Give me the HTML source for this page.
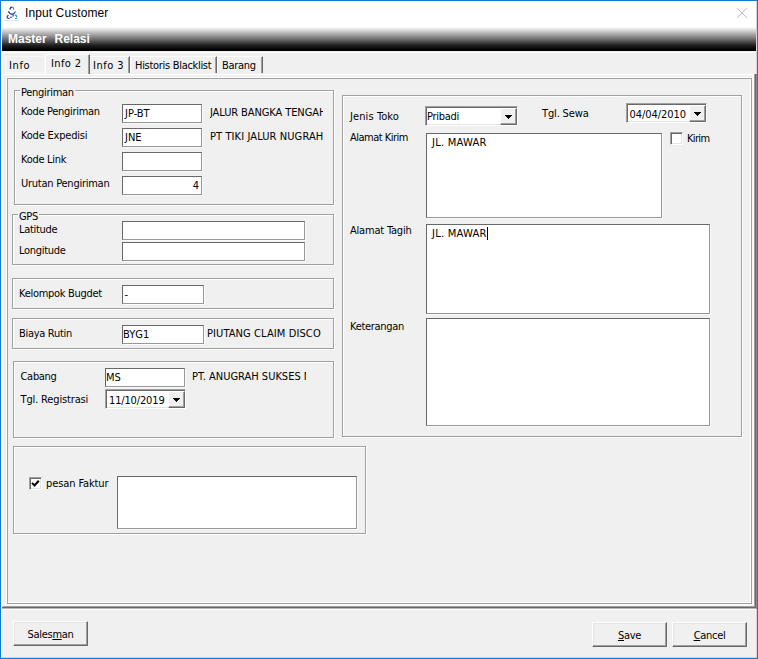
<!DOCTYPE html>
<html><head><meta charset="utf-8"><title>Input Customer</title>
<style>
html,body{margin:0;padding:0}
body{width:758px;height:659px;position:relative;overflow:hidden;background:#f0f0f0;
 font-family:"DejaVu Sans Condensed","DejaVu Sans","Liberation Sans",sans-serif;font-size:11px;color:#000}
div,span{position:absolute;box-sizing:border-box}
.t{white-space:nowrap;line-height:13px;height:13px;letter-spacing:-0.3px}
.c{letter-spacing:-0.1px;overflow:hidden}
.in{background:#fff;border:1px solid;border-color:#686868 #989898 #989898 #686868;box-shadow:1px 1px 0 #fafafa}
.in .t{left:2px;top:2px;letter-spacing:0}
.g{border:1px solid #a0a0a0;box-shadow:1px 1px 0 #fff, inset 1px 1px 0 #fff}
.cap{background:#f0f0f0;padding:0 1px}
.btn{border:1px solid;border-color:#fff #696969 #696969 #fff;box-shadow:inset -1px -1px 0 #a0a0a0, inset 1px 1px 0 #e3e3e3;text-align:center}
.btn .t{position:static;display:block;width:100%;text-align:center;margin-top:6px}
u{text-decoration:underline}
</style></head><body>
<!-- window frame -->
<div style="left:0;top:0;width:758px;height:659px;border:1px solid #1179d6;z-index:50;pointer-events:none"></div>
<div style="left:756px;top:1px;width:1px;height:657px;background:#d8d4d0;z-index:49"></div>
<div style="left:756px;top:74px;width:1px;height:535px;background:#8f8a86;z-index:49"></div>
<div style="left:1px;top:657px;width:756px;height:1px;background:#ddd3ca;z-index:49"></div>
<!-- title bar -->
<div style="left:1px;top:1px;width:756px;height:26px;background:#fff"></div>
<svg style="position:absolute;left:5px;top:5px" width="16" height="17" viewBox="0 0 16 17">
 <path d="M4.9 4.7 C5.1 2.9 6.2 2.1 7.3 2.2" fill="none" stroke="#233a98" stroke-width="1.3"/>
 <path d="M7.3 2.2 C8.3 2.3 8.7 3 8.6 4.6" fill="none" stroke="#1e96dc" stroke-width="1.2"/>
 <path d="M3.3 6.4 C4.4 8.4 5.8 9.3 6.9 9.3 C8 9.3 9 8.6 9.8 7.4" fill="none" stroke="#1d3594" stroke-width="1.2"/>
 <path d="M9.7 7.6 L10.6 6.4" fill="none" stroke="#1e8fdc" stroke-width="1.1"/>
 <path d="M3.6 10.3 C2.3 10.5 1.9 11.8 2.3 12.7 C2.7 13.5 3.7 13.6 4.6 13.4" fill="none" stroke="#1d3594" stroke-width="1.2"/>
 <path d="M5.2 12.3 L6.8 12 M7.3 11 L8.9 10.7" fill="none" stroke="#2040a4" stroke-width="1.2"/>
 <path d="M9.6 10.3 C10.9 9.9 11.8 10.5 11.7 12.3" fill="none" stroke="#1e96dc" stroke-width="1.2"/>
 <path d="M10 13.4 H12" stroke="#1ea0e2" stroke-width="1"/>
 <path d="M0 15.5 H14" stroke="#d6e6f7" stroke-width="1"/>
</svg>
<span class="t" style="left:25px;top:6px;font:12px/15px 'Liberation Sans',sans-serif;height:15px;letter-spacing:0.1px">Input Customer</span>
<svg style="position:absolute;left:736px;top:7px" width="12" height="12" viewBox="0 0 12 12"><path d="M1 1 L11 11 M11 1 L1 11" stroke="#b4b4b4" stroke-width="0.9" fill="none"/></svg>
<!-- banner -->
<div style="left:1px;top:27px;width:1px;height:631px;background:#fff"></div>
<div style="left:2px;top:27px;width:754px;height:24px;background:linear-gradient(#fff 0%,#7c7c7c 46%,#1e1e1e 77%,#000 95%,#000 100%)"></div>
<span class="t" style="left:8px;top:32px;color:#fff;font:bold 12px/14px 'Liberation Sans',sans-serif;height:14px;letter-spacing:0;word-spacing:4.5px">Master Relasi</span>
<!-- outer panel -->
<div style="left:2px;top:52px;width:754px;height:1px;background:#fff"></div>
<div style="left:2px;top:52px;width:1px;height:556px;background:#fff"></div>
<div style="left:3px;top:74px;width:751px;height:1px;background:#fff"></div>
<div style="left:752px;top:75px;width:2px;height:531px;background:#f9f9f9"></div>
<div style="left:3px;top:604px;width:751px;height:2px;background:#f9f9f9"></div>
<div style="left:754px;top:74px;width:1px;height:533px;background:#a0a0a0"></div>
<div style="left:755px;top:74px;width:1px;height:534px;background:#696969"></div>
<div style="left:3px;top:606px;width:752px;height:1px;background:#a0a0a0"></div>
<div style="left:2px;top:607px;width:754px;height:1px;background:#696969"></div>
<div style="left:2px;top:608px;width:754px;height:1px;background:#b8b8b8"></div>
<div style="left:2px;top:609px;width:754px;height:1px;background:#fff"></div>
<!-- sheet -->
<div id="sheetw" style="left:6px;top:77px;width:745px;height:526px;border:1px solid #fff"></div>
<div id="sheetg" style="left:7px;top:78px;width:745px;height:526px;border:1px solid #a0a0a0"></div>
<!-- tabs -->
<div id="tab1" style="left:5px;top:56px;width:40px;height:17px;border:1px solid #f8f8f8"></div>
<span class="t" style="left:9px;top:59px;letter-spacing:0.6px">Info</span>
<div id="tab3" style="left:90px;top:56px;width:40px;height:17px;border-right:1px solid #696969;box-shadow:inset -1px 0 0 #a0a0a0;border-top:1px solid #fff"></div>
<span class="t" style="left:93px;top:59px;letter-spacing:0.5px">Info 3</span>
<div id="tab4" style="left:130px;top:56px;width:87px;height:17px;border-right:1px solid #696969;box-shadow:inset -1px 0 0 #a0a0a0;border-top:1px solid #fff;border-left:1px solid #fff"></div>
<span class="t" style="left:135px;top:59px">Historis Blacklist</span>
<div id="tab5" style="left:217px;top:56px;width:46px;height:17px;border-right:1px solid #696969;box-shadow:inset -1px 0 0 #a0a0a0;border-top:1px solid #fff;border-left:1px solid #fff"></div>
<span class="t" style="left:222px;top:59px">Barang</span>
<div id="tab2" style="left:45px;top:54px;width:45px;height:20px;background:#f0f0f0;border:1px solid;border-color:#fff #696969 transparent #fff;border-bottom:0;box-shadow:inset -1px 0 0 #a0a0a0"></div>
<span class="t" style="left:51px;top:57px;letter-spacing:0.4px">Info 2</span>

<!-- Pengiriman group -->
<div class="g" style="left:14px;top:90px;width:320px;height:115px"></div>
<span class="t cap" style="left:20px;top:86px">Pengiriman</span>
<span class="t" style="left:21px;top:105px">Kode Pengiriman</span>
<span class="t" style="left:21px;top:129px;letter-spacing:-0.2px">Kode Expedisi</span>
<span class="t" style="left:21px;top:153px">Kode Link</span>
<span class="t" style="left:21px;top:177px;letter-spacing:-0.25px">Urutan Pengiriman</span>
<div class="in" style="left:122px;top:104px;width:80px;height:19px"><span class="t">JP-BT</span></div>
<div class="in" style="left:122px;top:128px;width:80px;height:19px"><span class="t">JNE</span></div>
<div class="in" style="left:122px;top:152px;width:80px;height:19px"></div>
<div class="in" style="left:122px;top:176px;width:80px;height:19px"><span class="t" style="left:auto;right:2px">4</span></div>
<span class="t c" style="left:210px;top:106px;width:113px">JALUR BANGKA TENGAH</span>
<span class="t c" style="left:210px;top:130px;width:114px;letter-spacing:0.1px">PT TIKI JALUR NUGRAH</span>

<!-- GPS group -->
<div class="g" style="left:12px;top:214px;width:322px;height:51px"></div>
<span class="t cap" style="left:18px;top:210px">GPS</span>
<span class="t" style="left:19px;top:223px">Latitude</span>
<span class="t" style="left:19px;top:244px">Longitude</span>
<div class="in" style="left:122px;top:221px;width:183px;height:19px"></div>
<div class="in" style="left:122px;top:242px;width:183px;height:19px"></div>

<!-- Kelompok Bugdet -->
<div class="g" style="left:12px;top:278px;width:322px;height:31px"></div>
<span class="t" style="left:19px;top:287px">Kelompok Bugdet</span>
<div class="in" style="left:122px;top:285px;width:82px;height:19px"><span class="t" style="left:1.5px">-</span></div>

<!-- Biaya Rutin -->
<div class="g" style="left:12px;top:318px;width:322px;height:31px"></div>
<span class="t" style="left:19px;top:327px">Biaya Rutin</span>
<div class="in" style="left:122px;top:325px;width:82px;height:19px"><span class="t" style="left:0">BYG1</span></div>
<span class="t c" style="left:207px;top:327px;width:114px;letter-spacing:0.1px">PIUTANG CLAIM DISCO</span>

<!-- Cabang -->
<div class="g" style="left:13px;top:361px;width:321px;height:77px"></div>
<span class="t" style="left:20.5px;top:370px">Cabang</span>
<span class="t" style="left:20.5px;top:393px;letter-spacing:-0.15px">Tgl. Registrasi</span>
<div class="in" style="left:105px;top:368px;width:80px;height:19px"><span class="t" style="left:0">MS</span></div>
<span class="t c" style="left:192px;top:370px;width:114px;letter-spacing:0">PT. ANUGRAH SUKSES M</span>
<div class="sk" style="left:105px;top:389px;width:81px;height:20px"><span class="t" style="left:3px;top:4px;letter-spacing:-0.15px">11/10/2019</span><div class="dd" style="left:62px;top:1px"></div></div>

<!-- pesan faktur -->
<div class="g" style="left:13px;top:446px;width:353px;height:88px"></div>
<div class="cb" style="left:29px;top:477px"><svg width="9" height="9" viewBox="0 0 9 9" style="position:absolute;left:1px;top:1px"><path d="M1 3.9 L3.5 6.5 L7.8 1.8" stroke="#000" stroke-width="2" fill="none"/></svg></div>
<span class="t" style="left:46px;top:477px;letter-spacing:-0.1px">pesan Faktur</span>
<div class="in" style="left:117px;top:476px;width:240px;height:53px"></div>

<!-- right panel -->
<div class="g" style="left:342px;top:95px;width:400px;height:342px"></div>
<span class="t" style="left:350px;top:110px;letter-spacing:0.1px">Jenis Toko</span>
<span class="t" style="left:350px;top:131px;letter-spacing:-0.5px">Alamat Kirim</span>
<span class="t" style="left:350px;top:224px;letter-spacing:-0.2px">Alamat Tagih</span>
<span class="t" style="left:350px;top:320px">Keterangan</span>
<div class="sk" style="left:425px;top:106px;width:93px;height:20px"><span class="t" style="left:1px;top:3px;letter-spacing:-0.3px">Pribadi</span><div class="dd" style="left:74px;top:1px"></div></div>
<span class="t" style="left:542px;top:107px;letter-spacing:-0.15px">Tgl. Sewa</span>
<div class="sk" style="left:626px;top:103px;width:81px;height:20px"><span class="t" style="left:2.5px;top:4px;letter-spacing:-0.05px">04/04/2010</span><div class="dd" style="left:62px;top:1px"></div></div>
<div class="in" style="left:426px;top:133px;width:236px;height:85px"><span class="t ta">JL. MAWAR</span></div>
<div class="cb" style="left:670px;top:132px"></div>
<span class="t" style="left:687px;top:132px;letter-spacing:-0.65px">Kirim</span>
<div class="in" style="left:426px;top:224px;width:284px;height:90px"><span class="t ta">JL. MAWAR</span><div style="left:60px;top:2px;width:1px;height:13px;background:#000"></div></div>
<div class="in" style="left:426px;top:318px;width:284px;height:108px"></div>

<!-- buttons -->
<div class="btn" style="left:13px;top:621px;width:75px;height:25px"><span class="t">Sales<u>m</u>an</span></div>
<div class="btn" style="left:592px;top:622px;width:75px;height:25px"><span class="t"><u>S</u>ave</span></div>
<div class="btn" style="left:672px;top:622px;width:75px;height:25px"><span class="t"><u>C</u>ancel</span></div>
<style>
.dd{width:17px;height:17px;background:#f0f0f0;border:1px solid;border-color:#fff #696969 #696969 #fff;box-shadow:inset -1px -1px 0 #a0a0a0}
.dd:after{content:"";position:absolute;left:7px;top:9px;width:1px;height:1px;background:#000;box-shadow:-3px -3px 0 #000,-2px -3px 0 #000,-1px -3px 0 #000,0px -3px 0 #000,1px -3px 0 #000,2px -3px 0 #000,3px -3px 0 #000,-2px -2px 0 #000,-1px -2px 0 #000,0px -2px 0 #000,1px -2px 0 #000,2px -2px 0 #000,-1px -1px 0 #000,0px -1px 0 #000,1px -1px 0 #000}
.cb{width:13px;height:13px;background:#fff;border:1px solid;border-color:#a0a0a0 #fff #fff #a0a0a0;box-shadow:inset 1px 1px 0 #696969, inset -1px -1px 0 #e3e3e3}
.sk{background:#fff;border:1px solid;border-color:#a0a0a0 #fff #fff #a0a0a0;box-shadow:inset 1px 1px 0 #696969, inset -1px -1px 0 #e3e3e3}
.sk .t{letter-spacing:0}
.in .ta{left:5px;top:2px;font:10px/13px "DejaVu Sans","Liberation Sans",sans-serif;letter-spacing:0.2px}
</style>
</body></html>
